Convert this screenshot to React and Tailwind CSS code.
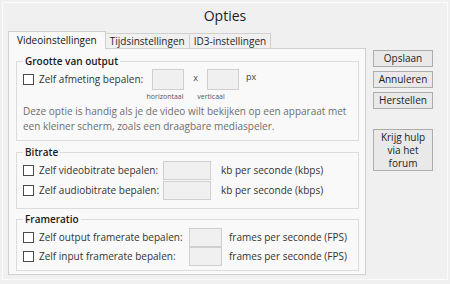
import React from "react";

const Check = () => (
    <span className="w-[11px] h-[11px] border border-[#4a4a4a] bg-white shrink-0" />
);

const Field = ({ w, h = 19 }) => (
    <span
        className={`block border border-[#cfcfcf] bg-[#f0f0f0] shrink-0 ${w} ${h === 20 ? "h-[21px]" : "h-[19px]"}`}
    />
);

const Group = ({ title, className = "", children }) => (
    <fieldset className={`border border-[#dcdcdc] w-[343px] ${className}`}>
        <legend className="ml-[6px] px-[2px] text-[10px] leading-[13px] font-semibold text-[#1a1a1a]">
            {title}
        </legend>
        {children}
    </fieldset>
);

const Btn = ({ children, className = "" }) => (
    <button
        className={`w-[60px] border border-[#adadad] bg-[#e9e9e9] text-[10px] leading-[13px] font-medium text-[#222] ${className}`}
    >
        {children}
    </button>
);

export default function App() {
    return (
        <div className="w-[450px] h-[284px] bg-[#f0f0f0] p-[2px] font-['Open_Sans',sans-serif] text-[#262626] overflow-hidden">
            <div className="h-[278px] border border-[#fbfbfb]">
                <div className="h-[23px] flex items-center justify-center text-[14px] text-[#1e1e1e] pt-[1px]">
                    Opties
                </div>
                <div className="flex pl-[5px] pt-[4px]">
                    <div className="w-[358px]">
                        {/* tabs */}
                        <div className="flex items-end h-[18px]">
                            <div className="relative z-10 h-[18px] -mb-px px-[8px] border border-b-0 border-[#d0d0d0] bg-[#f9f9f9] text-[10px] leading-[17px] text-[#111]">
                                Videoinstellingen
                            </div>
                            <div className="h-[15px] px-[4px] border border-b-0 border-l-0 border-[#d0d0d0] bg-[#f0f0f0] text-[10px] leading-[14px]">
                                Tijdsinstellingen
                            </div>
                            <div className="h-[15px] px-[4px] border border-b-0 border-l-0 border-[#d0d0d0] bg-[#f0f0f0] text-[10px] leading-[14px]">
                                ID3-instellingen
                            </div>
                        </div>
                        {/* panel */}
                        <div className="h-[227px] border border-[#d0d0d0] bg-[#f9f9f9] pl-[7px] pt-[6px]">
                            <Group title="Grootte van output" className="pb-[6px]">
                                <div className="flex items-center pl-[6px] pt-[1px]">
                                    <Check />
                                    <span className="ml-[5px] w-[113px] text-[10px] font-medium text-[#333]">
                                        Zelf afmeting bepalen:
                                    </span>
                                    <Field w="w-[32px]" h={20} />
                                    <span className="w-[23px] text-center text-[9px] text-[#444] -mt-[3px]">x</span>
                                    <Field w="w-[32px]" h={20} />
                                    <span className="ml-[7px] text-[9px] text-[#444] -mt-[5px]">px</span>
                                </div>
                                <div className="flex pl-[125px] text-[7px] leading-[9px] text-[#555] mt-[2px]">
                                    <span className="w-[46px] text-center">horizontaal</span>
                                    <span className="w-[40px] text-center ml-[3px]">verticaal</span>
                                </div>
                                <p className="pl-[6px] mt-[3px] text-[10px] leading-[15px] text-[#6e6e6e]">
                                    Deze optie is handig als je de video wilt bekijken op een apparaat met
                                    <br />
                                    een kleiner scherm, zoals een draagbare mediaspeler.
                                </p>
                            </Group>

                            <Group title="Bitrate" className="mt-[5px] pt-[2px] pb-[8px]">
                                <div className="flex flex-col gap-[1px] pl-[6px]">
                                    <div className="flex items-center">
                                        <Check />
                                        <span className="ml-[5px] w-[124px] text-[10px] text-[#333]">Zelf videobitrate bepalen:</span>
                                        <Field w="w-[48px]" />
                                        <span className="ml-[10px] text-[10px] text-[#333]">kb per seconde (kbps)</span>
                                    </div>
                                    <div className="flex items-center">
                                        <Check />
                                        <span className="ml-[5px] w-[124px] text-[10px] text-[#333]">Zelf audiobitrate bepalen:</span>
                                        <Field w="w-[48px]" />
                                        <span className="ml-[10px] text-[10px] text-[#333]">kb per seconde (kbps)</span>
                                    </div>
                                </div>
                            </Group>

                            <Group title="Frameratio" className="mt-[4px] pt-[2px] pb-[4px]">
                                <div className="flex flex-col pl-[6px]">
                                    <div className="flex items-center">
                                        <Check />
                                        <span className="ml-[5px] w-[150px] text-[10px] text-[#333]">Zelf output framerate bepalen:</span>
                                        <Field w="w-[33px]" />
                                        <span className="ml-[7px] text-[10px] text-[#333]">frames per seconde (FPS)</span>
                                    </div>
                                    <div className="flex items-center">
                                        <Check />
                                        <span className="ml-[5px] w-[150px] text-[10px] text-[#333]">Zelf input framerate bepalen:</span>
                                        <Field w="w-[33px]" />
                                        <span className="ml-[7px] text-[10px] text-[#333]">frames per seconde (FPS)</span>
                                    </div>
                                </div>
                            </Group>
                        </div>
                    </div>

                    <div className="ml-[7px] pt-[20px] flex flex-col gap-[4px]">
                        <Btn className="h-[17px]">Opslaan</Btn>
                        <Btn className="h-[17px]">Annuleren</Btn>
                        <Btn className="h-[17px]">Herstellen</Btn>
                        <Btn className="h-[42px] mt-[16px]">
                            Krijg hulp
                            <br />
                            via het
                            <br />
                            forum
                        </Btn>
                    </div>
                </div>
            </div>
        </div>
    );
}
